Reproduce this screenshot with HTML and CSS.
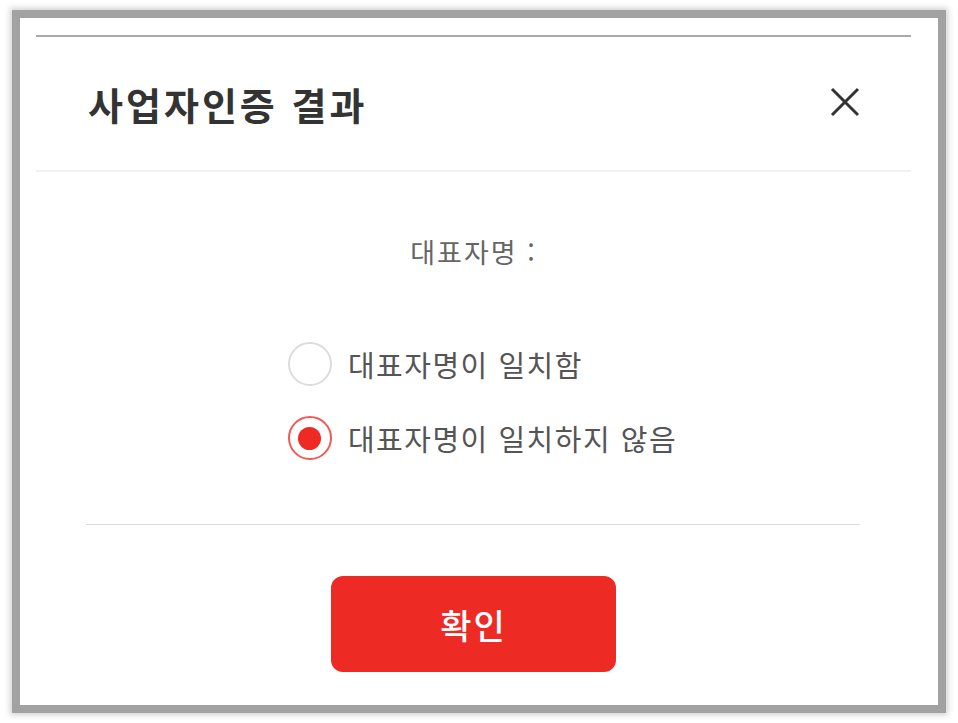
FILE: index.html
```html
<!DOCTYPE html>
<html lang="ko">
<head>
<meta charset="utf-8">
<title>사업자인증 결과</title>
<link rel="stylesheet" href="styles.css">
</head>
<body>
<div class="frame">
  <div class="sheet">
    <div class="topline"></div>
    <div class="header">
      <h1 class="title">사업자인증 결과</h1>
      <button class="close" aria-label="닫기">
        <svg width="32" height="32" viewBox="0 0 32 32"><path d="M3 3 L29 29 M29 3 L3 29" stroke="#333" stroke-width="3" fill="none"/></svg>
      </button>
    </div>
    <div class="content">
      <div class="label">대표자명 :</div>
      <div class="options">
        <label class="option"><span class="radio"></span><span class="opt-text">대표자명이 일치함</span></label>
        <label class="option"><span class="radio checked"></span><span class="opt-text">대표자명이 일치하지 않음</span></label>
      </div>
      <div class="divider"></div>
      <button class="confirm">확인</button>
    </div>
  </div>
</div>
</body>
</html>
```

FILE: styles.css
```css
html, body {
  margin: 0;
  padding: 0;
  background: #fff;
  font-family: "Noto Sans CJK KR", "Noto Sans", sans-serif;
}
body {
  padding: 18px 0 18px 20px;
}
.frame {
  width: 918px;
  height: 687px;
  background: #fff;
  box-shadow: 0 0 0 8px #a2a2a2, 0 0 6px 10px rgba(0, 0, 0, 0.18);
}
.sheet {
  margin-left: 16px;
  width: 875px;
  padding-top: 17px;
}
.topline {
  height: 2px;
  background: #a9a9a9;
}
.header {
  height: 133px;
  display: flex;
  align-items: center;
  justify-content: space-between;
  padding: 0 50px 0 52px;
  border-bottom: 2px solid #f1f1f1;
}
.title {
  margin: 0;
  font-size: 38px;
  font-weight: 700;
  color: #333;
  letter-spacing: 3px;
}
.close {
  border: 0;
  background: none;
  padding: 0;
  width: 32px;
  height: 32px;
  display: flex;
  margin-top: -4px;
}
.content {
  display: flex;
  flex-direction: column;
  align-items: center;
}
.label {
  margin-top: 60px;
  height: 40px;
  line-height: 40px;
  font-size: 27px;
  letter-spacing: 2px;
  color: #666;
}
.options {
  margin-top: 67px;
  display: flex;
  flex-direction: column;
  gap: 24px;
  align-items: flex-start;
  margin-left: 18px;
}
.option {
  height: 50px;
  display: flex;
  align-items: center;
  gap: 16px;
}
.radio {
  width: 40px;
  height: 40px;
  border: 2px solid #dcdcdc;
  border-radius: 50%;
  display: flex;
  align-items: center;
  justify-content: center;
  box-sizing: content-box;
}
.radio.checked {
  border-color: #f05a55;
}
.radio.checked::after {
  content: "";
  width: 23px;
  height: 23px;
  border-radius: 50%;
  background: #ee2a24;
}
.opt-text {
  font-size: 29px;
  letter-spacing: 1.5px;
  color: #555;
}
.divider {
  margin-top: 61px;
  align-self: stretch;
  margin-left: 50px;
  margin-right: 51px;
  height: 1px;
  background: #dcdcdc;
}
.confirm {
  margin-top: 51px;
  width: 285px;
  height: 96px;
  border: 0;
  border-radius: 12px;
  background: #ee2a24;
  color: #fff;
  font-family: inherit;
  font-size: 34px;
  letter-spacing: 2px;
  font-weight: 500;
}
```
